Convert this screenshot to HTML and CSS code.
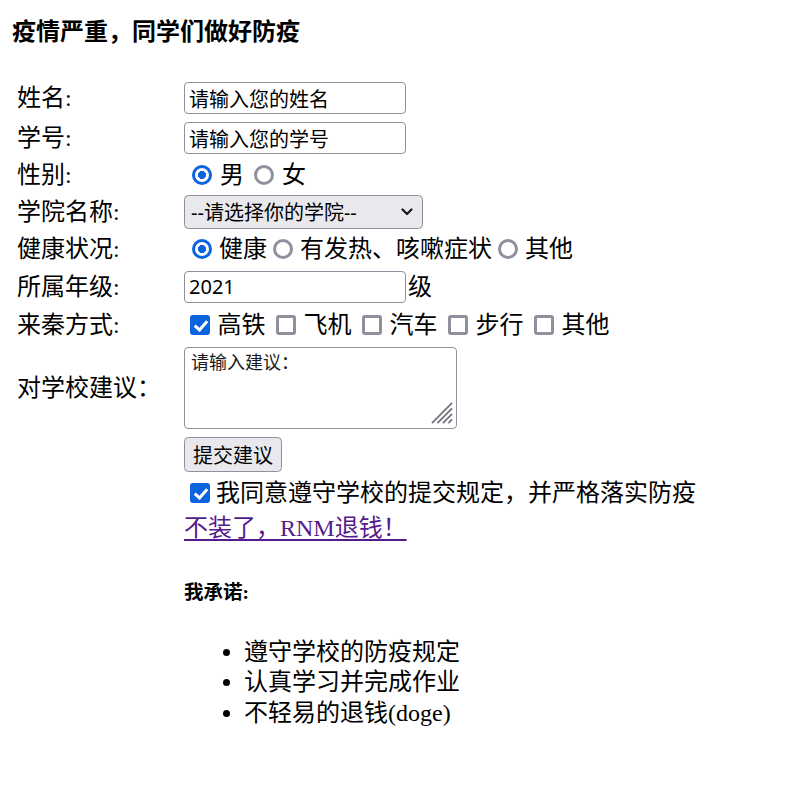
FILE: index.html
```html
<!DOCTYPE html>
<html lang="zh-CN">
<head>
<meta charset="utf-8">
<title>疫情防控信息登记</title>
<link rel="stylesheet" href="styles.css">
</head>
<body>
<h4 class="title">疫情严重，同学们做好防疫</h4>
<form class="form">
  <label class="lbl">姓名:</label>
  <div class="val"><input class="text" type="text" value="请输入您的姓名"></div>

  <label class="lbl">学号:</label>
  <div class="val"><input class="text" type="text" value="请输入您的学号"></div>

  <label class="lbl">性别:</label>
  <div class="val sex">
    <input class="radio first" type="radio" name="sex" checked><span class="opt">男</span>
    <input class="radio wide" type="radio" name="sex"><span class="opt">女</span>
  </div>

  <label class="lbl">学院名称:</label>
  <div class="val">
    <span class="select-wrap">
      <select class="select"><option>--请选择你的学院--</option></select>
      <svg class="chev" width="12" height="8" viewBox="0 0 12 8"><path d="M1.5 1.5 L6 6 L10.5 1.5" fill="none" stroke="#1a1a1a" stroke-width="2.2" stroke-linecap="round" stroke-linejoin="round"/></svg>
    </span>
  </div>

  <label class="lbl">健康状况:</label>
  <div class="val health">
    <input class="radio first" type="radio" name="health" checked><span class="opt">健康</span>
    <input class="radio" type="radio" name="health"><span class="opt">有发热、咳嗽症状</span>
    <input class="radio" type="radio" name="health"><span class="opt">其他</span>
  </div>

  <label class="lbl">所属年级:</label>
  <div class="val"><input class="text" type="text" value="2021"><span class="unit">级</span></div>

  <label class="lbl">来秦方式:</label>
  <div class="val ways">
    <input class="check first" type="checkbox" checked><span class="opt">高铁</span>
    <input class="check" type="checkbox"><span class="opt">飞机</span>
    <input class="check" type="checkbox"><span class="opt">汽车</span>
    <input class="check" type="checkbox"><span class="opt">步行</span>
    <input class="check" type="checkbox"><span class="opt">其他</span>
  </div>

  <label class="lbl">对学校建议：</label>
  <div class="val">
    <span class="area-wrap">
      <textarea class="area">请输入建议：</textarea>
      <svg class="grip" width="24" height="24" viewBox="0 0 24 24">
        <g stroke="#6f6f78" stroke-width="1.8" stroke-linecap="butt">
          <line x1="1" y1="23" x2="23" y2="1"/>
          <line x1="7" y1="23" x2="23" y2="7"/>
          <line x1="13" y1="23" x2="23" y2="13"/>
          <line x1="19" y1="23" x2="23" y2="19"/>
        </g>
      </svg>
    </span>
  </div>

  <div class="val span2"><button class="btn" type="button">提交建议</button></div>

  <div class="val span2 agree">
    <input class="check first" type="checkbox" checked><span class="opt tight">我同意遵守学校的提交规定，并严格落实防疫</span>
  </div>

  <div class="val span2"><a class="link" href="#">不装了，RNM退钱！</a></div>
</form>

<section class="promise">
  <h5 class="promise-title">我承诺:</h5>
  <ul class="promise-list">
    <li>遵守学校的防疫规定</li>
    <li>认真学习并完成作业</li>
    <li>不轻易的退钱(doge)</li>
  </ul>
</section>
</body>
</html>
```

FILE: styles.css
```css
* {
  box-sizing: border-box;
}

body {
  margin: 0;
  background: #ffffff;
  color: #000000;
  font-family: "Liberation Serif", "Noto Sans CJK SC", serif;
  font-size: 24px;
}

.title {
  margin: 17.5px 0 0 12px;
  font-size: 24px;
  line-height: 28px;
  font-weight: bold;
}

.form {
  display: grid;
  grid-template-columns: 167px 1fr;
  grid-template-rows: 40px 40px 33.5px 41px 33.5px 41px 35px 91px 43px 34px 35px;
  align-items: center;
  margin: 32.5px 0 0 17px;
}

.lbl {
  grid-column: 1;
  line-height: 28px;
  white-space: nowrap;
}

.val {
  grid-column: 2;
  display: flex;
  align-items: center;
  line-height: 28px;
}

.text {
  width: 222px;
  height: 32px;
  border: 1.5px solid #8f8f9d;
  border-radius: 4px;
  padding: 0 4px;
  font-family: "Noto Sans", "Noto Sans CJK SC", sans-serif;
  font-size: 20px;
  color: #000;
  background: #fff;
  outline: none;
}

.unit {
  margin-left: 2px;
}

/* radios */
.radio {
  appearance: none;
  -webkit-appearance: none;
  width: 20px;
  height: 20px;
  margin: 0 0 0 6px;
  border: 3px solid #8f8f9d;
  border-radius: 50%;
  background: #fff;
  flex: none;
}

.radio:checked {
  border: 3.4px solid #0b63de;
  background: radial-gradient(circle, #0b63de 0 3.8px, #ffffff 4.3px);
}

.radio.first {
  margin-left: 8px;
}

.sex .radio.wide {
  margin-left: 10px;
}

.opt {
  margin-left: 7.5px;
}

.sex .opt {
  margin-left: 8px;
}

.health .opt {
  margin-left: 7px;
}

/* checkboxes */
.check {
  appearance: none;
  -webkit-appearance: none;
  position: relative;
  width: 20px;
  height: 20px;
  margin: 0 0 0 10.5px;
  border: 3px solid #8f8f9d;
  border-radius: 3px;
  background: #fff;
  flex: none;
}

.check.first {
  margin-left: 6px;
}

.check:checked {
  border: none;
  background: #0b63de;
}

.check:checked::after {
  content: "";
  position: absolute;
  left: 7px;
  top: 3px;
  width: 5px;
  height: 10px;
  border-right: 3px solid #fff;
  border-bottom: 3px solid #fff;
  transform: rotate(42deg);
}

.agree .opt {
  margin-left: 6px;
}

/* select */
.select-wrap {
  position: relative;
  display: inline-block;
}

.select {
  appearance: none;
  -webkit-appearance: none;
  width: 239px;
  height: 34px;
  border: 1.5px solid #8f8f9d;
  border-radius: 4.5px;
  background: #e9e9ed;
  padding: 0 0 0 6px;
  font-family: "Noto Sans", "Noto Sans CJK SC", sans-serif;
  font-size: 20px;
  color: #000;
  display: block;
}

.chev {
  position: absolute;
  right: 10px;
  top: 13px;
  pointer-events: none;
}

/* textarea */
.area-wrap {
  position: relative;
  display: inline-block;
  height: 82px;
}

.area {
  display: block;
  width: 273px;
  height: 82px;
  border: 1.5px solid #8f8f9d;
  border-radius: 4px;
  padding: 3px 6px;
  resize: none;
  font-family: "Liberation Serif", "Noto Sans CJK SC", serif;
  font-size: 18px;
  line-height: 24px;
  color: #1a1a1a;
  background: #fff;
  outline: none;
}

.grip {
  position: absolute;
  right: 4px;
  bottom: 5px;
  width: 22px;
  height: 22px;
  pointer-events: none;
}

/* button */
.span2 {
  grid-column: 2;
}

.btn {
  width: 98px;
  height: 35px;
  border: 1.5px solid #8f8f9d;
  border-radius: 4.5px;
  background: #e9e9ed;
  padding: 0;
  font-family: "Noto Sans CJK SC", sans-serif;
  font-size: 20px;
  color: #000;
}

/* link */
.link {
  color: #551a8b;
  text-decoration: underline;
  text-decoration-thickness: 1.5px;
  text-underline-offset: 3px;
}

/* promise */
.promise {
  margin: 36px 0 0 184px;
}

.promise-title {
  margin: 0;
  font-size: 19.5px;
  line-height: 24px;
  font-weight: bold;
}

.promise-list {
  margin: 31.75px 0 0 0;
  padding-left: 60px;
  line-height: 30.5px;
}
```
